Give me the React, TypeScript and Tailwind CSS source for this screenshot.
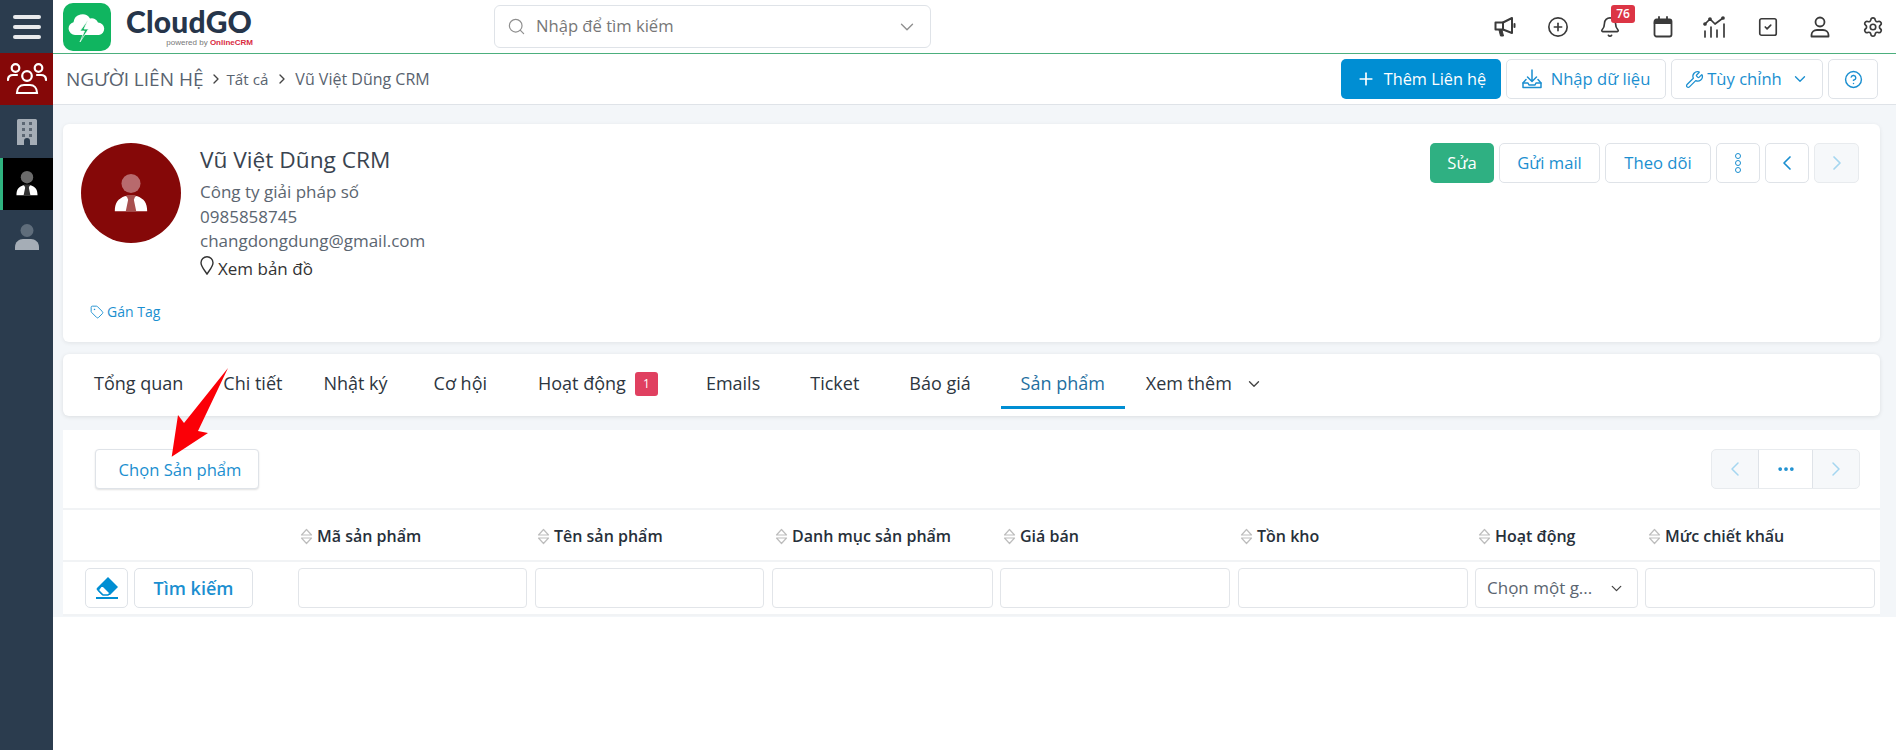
import React from "react";
import { Search, ChevronDown, ChevronRight, ChevronLeft, CirclePlus, Bell, SquareCheck, Settings, Plus, Wrench, CircleHelp, Tag, MoreHorizontal } from "lucide-react";

const font = { fontFamily: '"Open Sans", "Noto Sans", sans-serif' };

function Doctor({ head, tie, size }: { head: string; tie: string; size: number }) {
  return (
    <svg width={size} height={size} viewBox="0 0 36 42">
      <circle cx="18" cy="10" r="10" fill={head} />
      <path d="M1 39c0-9 3-13 11-16l6 2 6-2c8 3 11 7 11 16z" fill="#fff" />
      <path d="M13 22h10l-2 5 2.500 12h-11l2.500-12z" fill={tie} />
    </svg>
  );
}

function Building() {
  return (
    <svg width="20" height="26" viewBox="0 0 20 26">
      <path d="M0 1.500A1.500 1.500 0 0 1 1.500 0h17A1.500 1.500 0 0 1 20 1.500V26h-7v-4a3 3 0 0 0-6 0v4H0z" fill="#a5adb6" />
      <g fill="#5c6773">
        <rect x="5" y="3" width="3" height="3" /><rect x="12" y="3" width="3" height="3" />
        <rect x="5" y="9" width="3" height="3" /><rect x="12" y="9" width="3" height="3" />
        <rect x="5" y="15" width="3" height="3" /><rect x="12" y="15" width="3" height="3" />
      </g>
    </svg>
  );
}

function Sidebar() {
  return (
    <aside className="w-[53px] shrink-0 bg-[#2b3c4e] flex flex-col">
      <div className="h-[53px] flex flex-col items-center justify-center gap-[6px]">
        <span className="block w-[28px] h-[4px] rounded bg-[#e8eaec]" />
        <span className="block w-[28px] h-[4px] rounded bg-[#e8eaec]" />
        <span className="block w-[28px] h-[4px] rounded bg-[#e8eaec]" />
      </div>
      <div className="h-[52px] bg-[#850808] flex items-center justify-center">
        <svg width="40" height="32" viewBox="0 0 40 32" fill="none" stroke="#fff" strokeWidth="2.200" strokeLinecap="round">
          <circle cx="8.500" cy="5" r="3.800" />
          <circle cx="31.500" cy="5" r="3.800" />
          <circle cx="20" cy="13" r="4.800" />
          <path d="M1 17c0-3 2-5 5-5h4" />
          <path d="M39 17c0-3-2-5-5-5h-4" />
          <path d="M10 30c0-5 3-8 7-8h6c4 0 7 3 7 8z" />
        </svg>
      </div>
      <div className="h-[53px] flex items-center justify-center"><Building /></div>
      <div className="h-[52px] bg-black border-l-[3px] border-[#2fb380] flex items-center justify-center pr-[3px]">
        <Doctor head="#6b6b6b" tie="#333" size={26} />
      </div>
      <div className="h-[53px] flex items-center justify-center">
        <svg width="24" height="26" viewBox="0 0 24 26">
          <circle cx="12" cy="6.500" r="6.500" fill="#5f6d7b" />
          <path d="M0 26v-3c0-5 4-8 8-8h8c4 0 8 3 8 8v3z" fill="#a5adb6" />
        </svg>
      </div>
      <div className="flex-1" />
    </aside>
  );
}

function Logo() {
  return (
    <div className="flex items-center ml-[10px] w-[431px]">
      <div className="w-[48px] h-[48px] rounded-[10px] bg-[#10b560] flex items-center justify-center">
        <svg width="38" height="32" viewBox="0 0 38 32">
          <path d="M7 24a6.500 6.500 0 0 1-1.500-12.800A9 9 0 0 1 22 7.500a6.500 6.500 0 0 1 8 4 6.300 6.300 0 0 1 1 12.500z" fill="#fff" />
          <path d="M20 9l-8 11h4.500L12 31l8.500-13H16z" fill="#10b560" stroke="#fff" strokeWidth="0.700" />
        </svg>
      </div>
      <div className="ml-[15px] w-[127px] -mt-[2px] flex flex-col">
        <span className="text-[30px] leading-[34px] font-black text-[#26354a] tracking-[0.2px] whitespace-nowrap" style={{ fontFamily: '"Lato", sans-serif' }}>CloudGO</span>
        <span className="text-[8px] leading-[9px] text-[#777] text-right whitespace-nowrap" style={{ fontFamily: '"Liberation Sans", sans-serif' }}>
          powered by <span className="font-bold text-[#d92b3f]">OnlineCRM</span>
        </span>
      </div>
    </div>
  );
}

function MegaphoneIcon() {
  return (
    <svg width="22" height="22" viewBox="0 0 22 22" fill="none" stroke="#3a3a3a" strokeWidth="2" strokeLinejoin="round" strokeLinecap="round">
      <path d="M1.500 6.500H9L18 2v15l-9-3.500H1.500z" />
      <path d="M9 6.500v7" />
      <path d="M20.500 8v3" />
      <path d="M5 14l1.500 6h3L8 14z" fill="#3a3a3a" strokeWidth="1" />
    </svg>
  );
}

function CalendarIcon() {
  return (
    <svg width="22" height="22" viewBox="0 0 22 22" fill="none" stroke="#3a3a3a" strokeWidth="1.800" strokeLinecap="round">
      <rect x="2.500" y="3.500" width="17" height="17" rx="2" />
      <path d="M2.500 5.500a2 2 0 0 1 2-2h13a2 2 0 0 1 2 2V7.500h-17z" fill="#3a3a3a" strokeWidth="1" />
      <path d="M7 1v3M15 1v3" />
    </svg>
  );
}

function UserIcon() {
  return (
    <svg width="22" height="22" viewBox="0 0 22 22" fill="none" stroke="#3a3a3a" strokeWidth="1.800" strokeLinejoin="round">
      <circle cx="11" cy="6" r="4.500" />
      <path d="M2.500 20.500v-1.500c0-3 2.500-5 5.500-5h6c3 0 5.500 2 5.500 5v1.500z" />
    </svg>
  );
}

function ChartIcon() {
  return (
    <svg width="24" height="22" viewBox="0 0 24 22" fill="none" stroke="#3a3a3a" strokeWidth="1.700" strokeLinecap="round" strokeLinejoin="round">
      <path d="M2 8l5-5 5 5 8-6" />
      <circle cx="2" cy="8" r="1" fill="#3a3a3a" /><circle cx="7" cy="3" r="1" fill="#3a3a3a" /><circle cx="20" cy="2" r="1" fill="#3a3a3a" />
      <path d="M2 15v6M8 11v10M14 14v7M21 8v13" />
    </svg>
  );
}

function Header() {
  const ic = "w-[52.500px] h-[53px] flex items-center justify-center text-[#3a3a3a]";
  return (
    <header className="h-[54px] shrink-0 bg-white border-b border-[#4caf7d] flex items-start">
      <div className="h-[53px] flex items-center"><Logo /></div>
      <div className="mt-[5px] w-[437px] h-[43px] border border-[#dfe3e8] rounded-[6px] flex items-center pl-[12px] pr-[12px] text-[#777]">
        <Search size={19} strokeWidth={1.500} className="text-[#8f8f8f]" />
        <span className="ml-[10px] text-[16.600px]">Nhập để tìm kiếm</span>
        <ChevronDown size={22} strokeWidth={1.500} className="ml-auto text-[#8f8f8f]" />
      </div>
      <div className="ml-auto -mr-[3px] flex h-[53px] items-center">
        <div className={ic}><MegaphoneIcon /></div>
        <div className={ic}><CirclePlus size={22} strokeWidth={1.800} /></div>
        <div className={`${ic} relative`}>
          <Bell size={22} strokeWidth={1.800} />
          <span className="absolute left-[27px] top-[5px] w-[24px] h-[18px] rounded-[3px] bg-[#dc3545] text-white text-[12px] leading-[18px] font-semibold text-center">76</span>
        </div>
        <div className={ic}><CalendarIcon /></div>
        <div className={ic}><ChartIcon /></div>
        <div className={ic}><SquareCheck size={22} strokeWidth={1.800} /></div>
        <div className={ic}><UserIcon /></div>
        <div className={ic}><Settings size={22} strokeWidth={1.800} /></div>
      </div>
    </header>
  );
}

const outline = "h-[40px] bg-white border border-[#dfe3e8] rounded-[5px] text-[#1b8fd0] text-[16.600px] flex items-center justify-center whitespace-nowrap";

function Breadcrumb() {
  return (
    <div className="h-[51px] shrink-0 bg-white border-b border-[#dfe3e8] flex items-center pl-[13px] pr-[18px]">
      <span className="text-[19px] text-[#59636f]">NGƯỜI LIÊN HỆ</span>
      <ChevronRight size={16} className="ml-[5px] text-[#444]" />
      <span className="ml-[2px] text-[15.200px] text-[#59636f]">Tất cả</span>
      <ChevronRight size={16} className="ml-[6px] text-[#444]" />
      <span className="ml-[5px] text-[16px] text-[#59636f]">Vũ Việt Dũng CRM</span>
      <div className="ml-auto flex gap-[5px]">
        <button className="h-[40px] w-[160px] bg-[#008ed3] rounded-[5px] text-white text-[16.300px] flex items-center justify-center gap-[8px]">
          <Plus size={20} strokeWidth={2} />Thêm Liên hệ
        </button>
        <button className={`${outline} w-[160px] gap-[9px]`}>
          <svg width="20" height="20" viewBox="0 0 20 20" fill="none" stroke="#1b8fd0" strokeWidth="1.500" strokeLinejoin="round" strokeLinecap="round">
            <path d="M10 1v11M5.500 8l4.500 4.500L14.500 8" />
            <path d="M4 10.500L1 14v4.500h18V14l-3-3.500" />
            <path d="M1 14h5l1 2h6l1-2h5" />
          </svg>
          Nhập dữ liệu
        </button>
        <button className={`${outline} w-[152px] gap-[3px]`}>
          <Wrench size={19} strokeWidth={1.600} />Tùy chỉnh
          <ChevronDown size={18} strokeWidth={1.800} className="ml-[6px]" />
        </button>
        <button className={`${outline} w-[50px]`}><CircleHelp size={19} strokeWidth={1.800} /></button>
      </div>
    </div>
  );
}

function ProfileCard() {
  return (
    <section className="h-[218px] bg-white rounded-[6px] shadow-[0_1px_4px_rgba(0,0,0,0.08)] flex pt-[19px] pl-[18px] pr-[21px] relative">
      <div className="w-[100px] h-[100px] rounded-full bg-[#850808] flex items-center justify-center shrink-0 pt-[1px]">
        <Doctor head="#b86a6d" tie="#a8504f" size={40} />
      </div>
      <div className="ml-[19px] flex flex-col text-[#5b6570]">
        <div className="text-[22.700px] leading-[30px] mt-[2px] font-medium text-[#3a4450] whitespace-nowrap">Vũ Việt Dũng CRM</div>
        <div className="text-[17px] leading-[24.500px] mt-[5px]">Công ty giải pháp số</div>
        <div className="text-[17px] leading-[24.500px]">0985858745</div>
        <div className="text-[17px] leading-[24.500px]">changdongdung@gmail.com</div>
        <div className="text-[17px] leading-[24px] mt-[3px] flex items-center text-[#333]">
          <svg width="14" height="19" viewBox="0 0 14 19" fill="none" stroke="#333" strokeWidth="1.400" className="-mt-[6px]">
            <path d="M7 18C4 13.500 1 10.500 1 6.800a6 6 0 0 1 12 0C13 10.500 10 13.500 7 18z" />
          </svg>
          <span className="ml-[4px]">Xem bản đồ</span>
        </div>
      </div>
      <div className="absolute left-[27px] top-[177px] flex items-center gap-[3px] text-[14px] text-[#1b8fd0]">
        <Tag size={14} strokeWidth={1.600} />Gán Tag
      </div>
      <div className="ml-auto flex gap-[5px]">
        <button className="h-[40px] w-[64px] rounded-[5px] bg-[#2fb082] text-white text-[16.600px]">Sửa</button>
        <button className={`${outline} w-[101px]`}>Gửi mail</button>
        <button className={`${outline} w-[106px]`}>Theo dõi</button>
        <button className={`${outline} w-[44px] flex-col gap-[1px]`}>
          <span className="block w-[6px] h-[6px] rounded-full border-[1.500px] border-[#1b8fd0]" />
          <span className="block w-[6px] h-[6px] rounded-full border-[1.500px] border-[#1b8fd0]" />
          <span className="block w-[6px] h-[6px] rounded-full border-[1.500px] border-[#1b8fd0]" />
        </button>
        <button className={`${outline} w-[44px]`}><ChevronLeft size={24} strokeWidth={1.700} /></button>
        <button className="h-[40px] w-[45px] bg-[#f6f8fa] border border-[#e8ebee] rounded-[5px] flex items-center justify-center text-[#a5d6f0]"><ChevronRight size={24} strokeWidth={1.700} /></button>
      </div>
    </section>
  );
}

function TabsCard() {
  const tab = "text-[18px] font-medium text-[#2d3640] whitespace-nowrap pb-[4px]";
  return (
    <nav className="h-[62px] mt-[12px] bg-white rounded-[6px] shadow-[0_1px_4px_rgba(0,0,0,0.1)] flex items-center pl-[31px]">
      <span className={tab}>Tổng quan</span>
      <span className={`${tab} ml-[40px]`}>Chi tiết</span>
      <span className={`${tab} ml-[41px]`}>Nhật ký</span>
      <span className={`${tab} ml-[46px]`}>Cơ hội</span>
      <span className={`${tab} ml-[51px]`}>Hoạt động</span>
      <span className="ml-[9px] mb-[2px] w-[23px] h-[24px] rounded-[3px] bg-[#e04060] text-white text-[12px] leading-[24px] text-center">1</span>
      <span className={`${tab} ml-[48px]`}>Emails</span>
      <span className={`${tab} ml-[50px]`}>Ticket</span>
      <span className={`${tab} ml-[50px]`}>Báo giá</span>
      <span className="ml-[30px] w-[124px] h-[62px] pb-[4px] flex items-center justify-center relative text-[18px] font-medium text-[#1f6f9f] whitespace-nowrap">
        Sản phẩm
        <span className="absolute left-0 right-0 top-[52px] h-[3px] bg-[#008ed3]" />
      </span>
      <span className={`${tab} ml-[21px]`}>Xem thêm</span>
      <ChevronDown size={18} strokeWidth={1.800} className="ml-[13px] mb-[2px] text-[#444]" />
    </nav>
  );
}

function SortIcon() {
  return (
    <svg width="13" height="17" viewBox="0 0 13 17" fill="none" stroke="#bdbdbd" strokeWidth="1.200" strokeLinejoin="round" className="shrink-0">
      <path d="M1.500 7L6.500 1.500 11.500 7zM1.500 10L6.500 15.500 11.500 10z" />
    </svg>
  );
}

const columns = [
  { label: "Mã sản phẩm", cls: "w-[237px] pl-[6px]" },
  { label: "Tên sản phẩm", cls: "w-[237px] pl-[6px]" },
  { label: "Danh mục sản phẩm", cls: "w-[228px] pl-[7px]" },
  { label: "Giá bán", cls: "w-[238px] pl-[7px]" },
  { label: "Tồn kho", cls: "w-[237px] pl-[6px]" },
  { label: "Hoạt động", cls: "w-[171px] pl-[7px]" },
  { label: "Mức chiết khấu", cls: "w-[234px] pl-[6px]" },
];

const inputCls = "ml-[4px] mr-[4px] h-[40px] bg-white border border-[#e2e5e9] rounded-[4px]";
const inputWide = "ml-[4px] mr-[3px] h-[40px] bg-white border border-[#e2e5e9] rounded-[4px]";
const inputLast = "ml-[3px] mr-[4px] h-[40px] bg-white border border-[#e2e5e9] rounded-[4px]";

function ProductCard() {
  return (
    <section className="h-[186px] mt-[14px] bg-white">
      <div className="h-[80px] flex items-start pt-[19px] pl-[32px] pr-[20px] border-b-2 border-[#f1f3f5]">
        <button className="h-[40px] w-[164px] pt-[2px] pl-[6px] bg-white border border-[#dfe3e8] rounded-[4px] shadow-[0_1px_2px_rgba(0,0,0,0.12)] text-[#1b8fd0] text-[16.600px]">Chọn Sản phẩm</button>
        <div className="ml-auto h-[40px] flex bg-[#f6f8fa] border border-[#e8ebee] rounded-[5px] text-[#a5d6f0]">
          <span className="w-[46px] flex items-center justify-center"><ChevronLeft size={24} strokeWidth={1.500} /></span>
          <span className="w-[55px] bg-white border-x border-[#dfe3e8] flex items-center justify-center text-[#1b8fd0]"><MoreHorizontal size={20} strokeWidth={2.500} /></span>
          <span className="w-[46px] flex items-center justify-center"><ChevronRight size={24} strokeWidth={1.500} /></span>
        </div>
      </div>
      <div className="h-[52px] pt-[2px] flex items-center border-b-2 border-[#f1f3f5]">
        <div className="w-[231px] shrink-0" />
        {columns.map((c) => (
          <div key={c.label} className={`${c.cls} shrink-0 flex items-center gap-[4px]`}>
            <SortIcon />
            <span className="text-[16px] font-semibold text-[#27303a] whitespace-nowrap">{c.label}</span>
          </div>
        ))}
      </div>
      <div className="h-[54px] flex items-start pt-[6px] border-b-2 border-[#f1f3f5]">
        <div className="w-[231px] shrink-0 flex pl-[22px] gap-[6px]">
          <button className={`${outline} w-[43px]`}>
            <svg width="26" height="24" viewBox="0 0 26 24">
              <path d="M14 1L24 11L16 19H8L3 14Q2 13 3 12Z" fill="#008ed3" />
              <path d="M8 9L16 17L14 19H9L5 15Q4 14 5 13Z" fill="#fff" stroke="#008ed3" strokeWidth="1.500" />
              <rect x="2" y="21" width="22" height="2" fill="#008ed3" />
            </svg>
          </button>
          <button className={`${outline} w-[119px] !text-[18px] font-semibold`}>Tìm kiếm</button>
        </div>
        <div className="w-[237px] shrink-0"><div className={inputCls} /></div>
        <div className="w-[237px] shrink-0"><div className={inputCls} /></div>
        <div className="w-[228px] shrink-0"><div className={inputWide} /></div>
        <div className="w-[238px] shrink-0"><div className={inputCls} /></div>
        <div className="w-[237px] shrink-0"><div className={inputWide} /></div>
        <div className="w-[171px] shrink-0">
          <div className={`${inputCls} flex items-center pl-[11px] pr-[12px] text-[17px] text-[#5b6570] whitespace-nowrap`}>
            Chọn một g...
            <ChevronDown size={17} strokeWidth={1.800} className="ml-auto text-[#444]" />
          </div>
        </div>
        <div className="w-[237px] shrink-0"><div className={inputLast} /></div>
      </div>
    </section>
  );
}

function Arrow() {
  return (
    <svg className="absolute left-[160px] top-[360px] pointer-events-none" width="80" height="105" viewBox="160 360 80 105">
      <polygon points="171.700,456.700 178,415 184,423 228,368 198,431 208,433" fill="#fb0007" />
    </svg>
  );
}

export default function App() {
  return (
    <div className="relative w-[1896px] h-[750px] overflow-hidden flex bg-white" style={font}>
      <Sidebar />
      <div className="flex-1 flex flex-col min-w-0">
        <Header />
        <Breadcrumb />
        <main className="h-[512px] shrink-0 bg-[#f3f6f9] pt-[19px] pl-[10px] pr-[16px]">
          <ProfileCard />
          <TabsCard />
          <ProductCard />
        </main>
        <div className="flex-1 bg-white" />
      </div>
      <Arrow />
    </div>
  );
}
